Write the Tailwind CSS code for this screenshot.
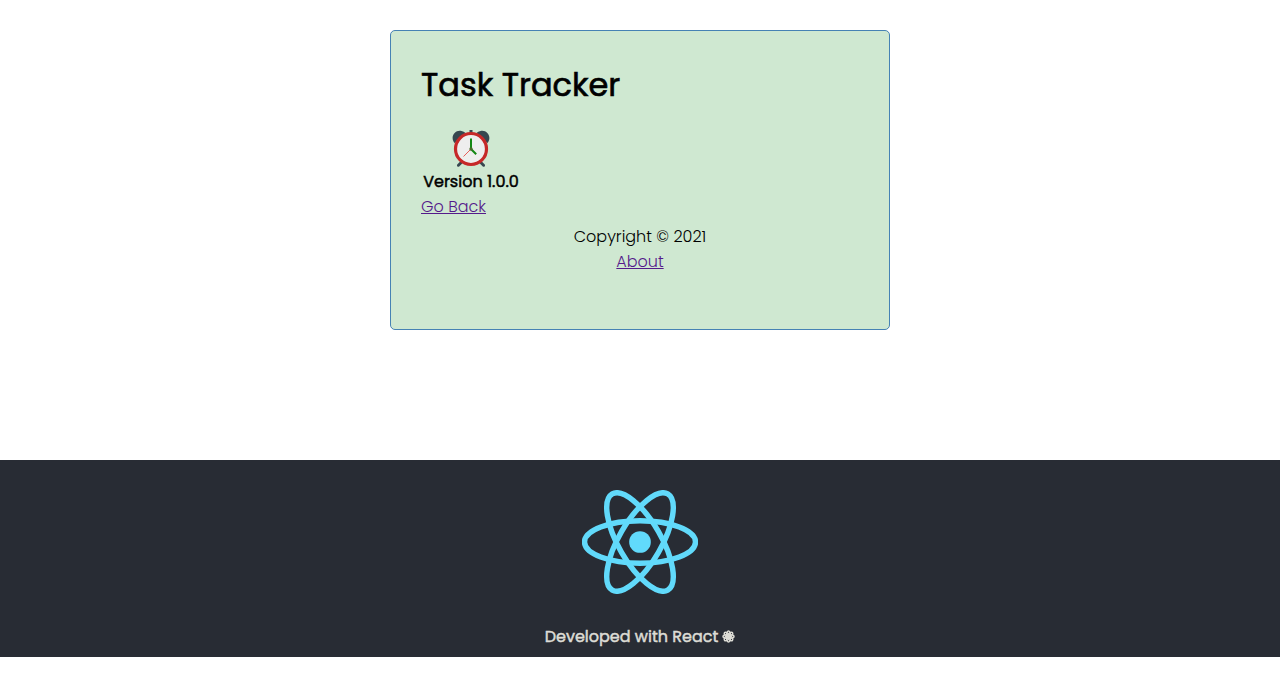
<!DOCTYPE html>
<html lang="en">
<head>
<meta charset="utf-8">
<meta name="viewport" content="width=device-width, initial-scale=1">
<title>Task Tracker</title>
<script src="https://cdn.jsdelivr.net/npm/@tailwindcss/browser@4"></script>
</head>
<body class="bg-white font-['Poppins','Inter',sans-serif] text-base font-light text-black">
<main class="mx-auto mt-[30px] min-h-[300px] max-w-[500px] rounded-[5px] border border-[#4682b4] bg-[#cfe8d1] p-[30px]">
  <header class="mb-5">
    <h1 class="text-[32px] leading-[48px] font-normal [-webkit-text-stroke:0.02em]">Task Tracker</h1>
  </header>
  <section>
    <div class="flex w-[100px] flex-col items-center">
      <svg class="size-10" viewBox="0 0.500 40 40" role="img" aria-label="Alarm clock">
        <g fill="#37474f">
          <path d="M18.500 1.500h3v4h-3z"/>
          <path d="M2.500 13C-.5 7.500 4.500 1 10.500 2.500Q13 3 14.500 4.500L3.700 14.500Q3 14 2.500 13Z"/>
          <path d="M37.500 13C40.500 7.500 35.500 1 29.500 2.500Q27 3 25.500 4.500L36.300 14.500Q37 14 37.500 13Z"/>
          <path d="M6.200 36l4-4 2 2-4 4q-1 .7-1.800 0-.8-1-.2-2zM33.800 36l-4-4-2 2 4 4q1 .7 1.800 0 .8-1 .2-2z"/>
        </g>
        <circle cx="20" cy="20.500" r="15.500" fill="#eee" stroke="#c62828" stroke-width="3.200"/>
        <path d="M20 20.500L12.500 28" stroke="#e53935" stroke-width=".8"/>
        <path d="M20 10V20.500l5.200 5.200" fill="none" stroke="#148814" stroke-width="2"/>
        <circle cx="20" cy="20.500" r="1.700" fill="#4b6b2b"/>
      </svg>
      <h4 class="leading-[25px] font-normal whitespace-nowrap [-webkit-text-stroke:0.03em]">Version 1.0.0</h4>
    </div>
    <a href="#" class="block w-fit leading-[25px] text-[#551a8b] underline">Go Back</a>
  </section>
  <footer class="mt-[5px] text-center leading-[25px]">
    <p>Copyright © 2021</p>
    <a href="#" class="text-[#551a8b] underline">About</a>
  </footer>
</main>
<footer class="mt-[130px] mb-[30px] flex flex-col items-center bg-[#282c34] pt-[30px] pb-2 text-[#dddcd5]">
  <svg class="h-[104px] w-[116px]" viewBox="-11.500 -10.300 23 20.600" role="img" aria-label="React logo">
    <circle r="2.150" fill="#61dafb"/>
    <g fill="none" stroke="#61dafb" stroke-width="1.080">
      <ellipse rx="11" ry="4.200"/>
      <ellipse rx="11" ry="4.200" transform="rotate(60)"/>
      <ellipse rx="11" ry="4.200" transform="rotate(120)"/>
    </g>
  </svg>
  <h4 class="mt-[30px] flex items-center gap-1 leading-[25px] font-normal [-webkit-text-stroke:0.03em]">
    Developed with React
    <svg class="size-[13px]" viewBox="-6.500 -6.500 13 13" aria-hidden="true" fill="none" stroke="currentColor" stroke-width="1.500">
      <circle r="1.500" fill="currentColor"/>
      <ellipse rx="5.500" ry="2"/>
      <ellipse rx="5.500" ry="2" transform="rotate(45)"/>
      <ellipse rx="5.500" ry="2" transform="rotate(90)"/>
      <ellipse rx="5.500" ry="2" transform="rotate(135)"/>
    </svg>
  </h4>
</footer>
</body>
</html>
